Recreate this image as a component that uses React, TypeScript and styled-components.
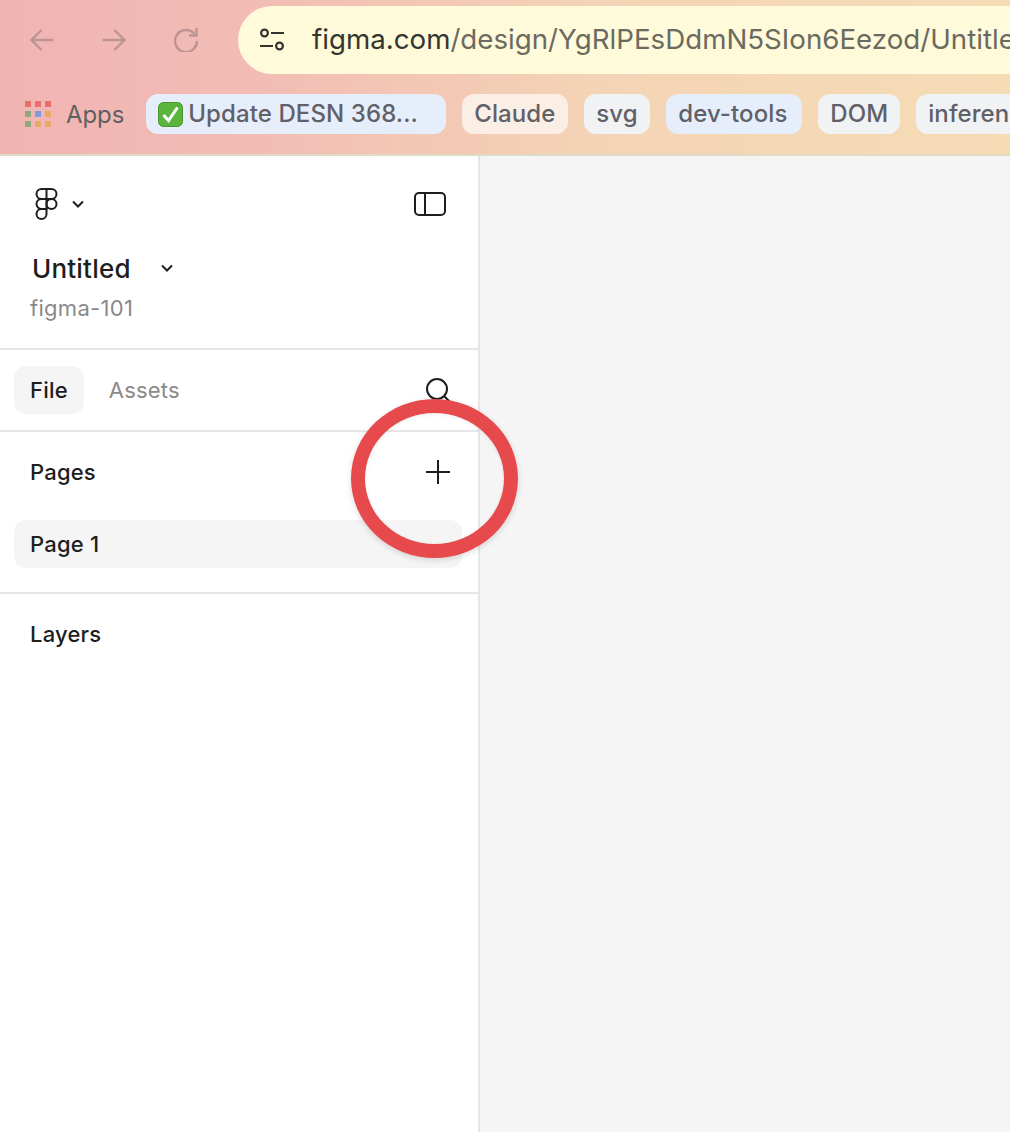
import styled, { createGlobalStyle } from "styled-components";

const GlobalStyle = createGlobalStyle`
  html, body {
    margin: 0;
    padding: 0;
    background: #ffffff;
  }
  body {
    font-family: Inter, "Noto Sans", sans-serif;
  }
`;

const Page = styled.div`
  position: relative;
  width: 1010px;
  height: 1132px;
  overflow: hidden;
  display: flex;
  flex-direction: column;
`;

const Chrome = styled.header`
  flex: none;
  height: 154px;
  box-sizing: content-box;
  border-bottom: 2px solid #dedcc4;
  background: linear-gradient(90deg, #f1b4b3 0%, #f2bcb4 25%, #f4d4b6 60%, #f5dcb5 100%);
  display: flex;
  flex-direction: column;
`;

const Toolbar = styled.div`
  display: flex;
  align-items: center;
  height: 68px;
  margin-top: 6px;
  padding-left: 30px;
`;

const NavButton = styled.button`
  flex: none;
  width: 24px;
  height: 24px;
  padding: 0;
  margin-right: 48px;
  border: 0;
  background: none;
  color: #bd9492;
  display: flex;

  &:last-of-type {
    margin-right: 40px;
  }
`;

const UrlBar = styled.div`
  flex: none;
  width: 840px;
  height: 68px;
  border-radius: 34px;
  background: #fffad9;
  display: flex;
  align-items: center;
  padding-left: 22px;
  box-sizing: border-box;
`;

const TuneIcon = styled.svg`
  flex: none;
  width: 24px;
  height: 24px;
  margin-right: 28px;
  color: #33332f;
`;

const UrlText = styled.span`
  font-size: 27.7px;
  line-height: 32px;
  padding-bottom: 2px;
  color: #6b6a60;
  white-space: nowrap;
`;

const UrlHost = styled.span`
  color: #35352f;
`;

const Bookmarks = styled.nav`
  display: flex;
  align-items: center;
  height: 40px;
  margin-top: 20px;
  padding-left: 25px;
`;

const AppsGrid = styled.svg`
  flex: none;
  width: 26px;
  height: 26px;
  margin-right: 15px;
`;

const AppsLabel = styled.span`
  font-size: 24px;
  letter-spacing: -0.1px;
  color: #5f6064;
  margin-right: 22px;
`;

const Chip = styled.div<{ $bg: string; $width: number }>`
  flex: none;
  width: ${(p) => p.$width}px;
  height: 40px;
  margin-right: 16px;
  border-radius: 12px;
  background: ${(p) => p.$bg};
  color: #5f6068;
  font-size: 24px;
  font-weight: 500;
  letter-spacing: 0.1px;
  line-height: 40px;
  padding-left: 12px;
  box-sizing: border-box;
  white-space: nowrap;
  overflow: hidden;
  display: flex;
  align-items: center;
`;

const CheckEmoji = styled.svg`
  flex: none;
  width: 25px;
  height: 25px;
  margin-right: 5px;
`;

const Workspace = styled.main`
  flex: 1;
  display: flex;
  min-height: 0;
`;

const Sidebar = styled.aside`
  flex: none;
  width: 480px;
  box-sizing: border-box;
  border-right: 2px solid #e6e6e6;
  background: #ffffff;
  display: flex;
  flex-direction: column;
`;

const Canvas = styled.div`
  flex: 1;
  background: #f5f5f5;
`;

const FileHeader = styled.section`
  height: 194px;
  box-sizing: border-box;
  border-bottom: 2px solid #e6e6e6;
  padding: 32px 32px 0 30px;
`;

const LogoRow = styled.div`
  display: flex;
  align-items: center;
  height: 32px;
  padding-left: 5px;
`;

const LogoIcon = styled.svg`
  flex: none;
  width: 23px;
  height: 32px;
  color: #1e1e1e;
`;

const Chevron = styled.svg`
  flex: none;
  width: 12px;
  height: 8px;
  color: #1e1e1e;
`;

const LogoChevron = styled(Chevron)`
  margin-left: 14px;
`;

const PanelToggle = styled.svg`
  flex: none;
  width: 32px;
  height: 26px;
  margin-left: auto;
  color: #1e1e1e;
`;

const TitleRow = styled.div`
  display: flex;
  align-items: center;
  height: 36px;
  margin-top: 30px;
  padding-left: 2px;
`;

const Title = styled.h1`
  margin: 0 30px 0 0;
  font-size: 26px;
  font-weight: 500;
  letter-spacing: 0.2px;
  color: #1e1e1e;
`;

const Team = styled.div`
  margin-top: 7px;
  font-size: 22px;
  line-height: 30px;
  letter-spacing: 0.3px;
  color: #8a8a8a;
`;

const Tabs = styled.div`
  height: 82px;
  box-sizing: border-box;
  border-bottom: 2px solid #e6e6e6;
  padding: 16px 27px 0 14px;
  display: flex;
  align-items: flex-start;
`;

const Tab = styled.div<{ $active?: boolean }>`
  height: 48px;
  line-height: 48px;
  padding: 0 16px;
  border-radius: 12px;
  font-size: 22px;
  font-weight: ${(p) => (p.$active ? 500 : 400)};
  letter-spacing: 0.2px;
  color: ${(p) => (p.$active ? "#1e1e1e" : "#8a8a8a")};
  background: ${(p) => (p.$active ? "#f5f5f5" : "transparent")};
  margin-right: 9px;
`;

const SearchIcon = styled.svg`
  flex: none;
  width: 26px;
  height: 30px;
  margin: 12px 0 0 auto;
  color: #1e1e1e;
`;

const PagesSection = styled.section`
  height: 162px;
  box-sizing: border-box;
  border-bottom: 2px solid #e6e6e6;
  padding: 20px 16px 0 14px;
`;

const SectionRow = styled.div`
  display: flex;
  align-items: center;
  justify-content: space-between;
  height: 40px;
  padding: 0 12px 0 16px;
`;

const SectionLabel = styled.span`
  font-size: 22px;
  font-weight: 500;
  letter-spacing: 0.2px;
  color: #1e1e1e;
`;

const PlusIcon = styled.svg`
  flex: none;
  width: 24px;
  height: 24px;
  color: #1e1e1e;
`;

const PageItem = styled.div`
  height: 48px;
  line-height: 48px;
  margin-top: 28px;
  padding-left: 16px;
  border-radius: 12px;
  background: #f5f5f5;
  font-size: 22px;
  font-weight: 500;
  letter-spacing: 0.2px;
  color: #1e1e1e;
`;

const LayersSection = styled.section`
  padding: 20px 16px 0 14px;
`;

const Highlight = styled.div`
  position: absolute;
  left: 351px;
  top: 399px;
  width: 167px;
  height: 159px;
  box-sizing: border-box;
  border: 14px solid #e64a4d;
  border-radius: 50%;
  box-shadow: 0 2px 6px rgba(0, 0, 0, 0.14), inset 0 1px 4px rgba(0, 0, 0, 0.08);
`;

const appsColors = [
  ["#e8706b", "#e8706b", "#e8706b"],
  ["#90a97f", "#7f9bdb", "#e8a866"],
  ["#90a97f", "#e8a866", "#e8a866"],
];

const chips = [
  { label: "Claude", bg: "#fbeee4", width: 106 },
  { label: "svg", bg: "#f1f2f4", width: 66 },
  { label: "dev-tools", bg: "#e6eefb", width: 136 },
  { label: "DOM", bg: "#f1f2f4", width: 82 },
  { label: "inference", bg: "#f1f2f4", width: 130 },
];

function App() {
  return (
    <Page>
      <GlobalStyle />
      <Chrome>
        <Toolbar>
          <NavButton>
            <svg width="24" height="24" viewBox="0 0 24 24" fill="none" stroke="currentColor" strokeWidth="2.4">
              <path d="M23.5 12H1.5M11.5 2 1.5 12l10 10" />
            </svg>
          </NavButton>
          <NavButton>
            <svg width="24" height="24" viewBox="0 0 24 24" fill="none" stroke="currentColor" strokeWidth="2.4">
              <path d="M.5 12h22M12.5 2l10 10-10 10" />
            </svg>
          </NavButton>
          <NavButton>
            <svg width="24" height="24" viewBox="0 0 24 24" fill="none" stroke="currentColor" strokeWidth="2.4">
              <path d="M20.6 6.2A11 11 0 1 0 23 13" />
              <path d="M22.5 0v7.5H15" />
            </svg>
          </NavButton>
          <UrlBar>
            <TuneIcon viewBox="0 0 24 24" fill="none" stroke="currentColor" strokeWidth="2.2">
              <circle cx="4.5" cy="5" r="3.4" />
              <path d="M11 5h13M0 18h13" />
              <circle cx="19.5" cy="18" r="3.4" />
            </TuneIcon>
            <UrlText>
              <UrlHost>figma.com</UrlHost>/design/YgRlPEsDdmN5SIon6Eezod/Untitled
            </UrlText>
          </UrlBar>
        </Toolbar>
        <Bookmarks>
          <AppsGrid viewBox="0 0 26 26">
            {appsColors.map((row, r) =>
              row.map((color, c) => <rect key={`${r}-${c}`} x={c * 10} y={r * 10} width="6" height="6" fill={color} />),
            )}
          </AppsGrid>
          <AppsLabel>Apps</AppsLabel>
          <Chip $bg="#e6eefb" $width={300}>
            <CheckEmoji viewBox="0 0 25 25">
              <rect x="0.5" y="0.5" width="24" height="24" rx="5" fill="#5bb53c" stroke="#43982b" />
              <path d="M5.5 13l5 5.5L19.5 5.5" fill="none" stroke="#ffffff" strokeWidth="3" />
            </CheckEmoji>
            Update DESN 368...
          </Chip>
          {chips.map((chip) => (
            <Chip key={chip.label} $bg={chip.bg} $width={chip.width}>
              {chip.label}
            </Chip>
          ))}
        </Bookmarks>
      </Chrome>
      <Workspace>
        <Sidebar>
          <FileHeader>
            <LogoRow>
              <LogoIcon viewBox="0 0 23 32" fill="none" stroke="currentColor" strokeWidth="2">
                <path d="M11.5 1H6.5a5 5 0 0 0 0 10h5zM11.5 1h5a5 5 0 0 1 0 10h-5zM11.5 11h-5a5 5 0 0 0 0 10h5z" />
                <circle cx="16.5" cy="16" r="5" />
                <path d="M6.5 21h5v5a5 5 0 1 1-5-5z" />
              </LogoIcon>
              <LogoChevron viewBox="0 0 12 8" fill="none" stroke="currentColor" strokeWidth="2">
                <path d="M1 1.5l5 5 5-5" />
              </LogoChevron>
              <PanelToggle viewBox="0 0 32 26" fill="none" stroke="currentColor" strokeWidth="2">
                <rect x="1" y="2" width="30" height="22" rx="4" />
                <path d="M11 2v22" />
              </PanelToggle>
            </LogoRow>
            <TitleRow>
              <Title>Untitled</Title>
              <Chevron viewBox="0 0 12 8" fill="none" stroke="currentColor" strokeWidth="2">
                <path d="M1 1.5l5 5 5-5" />
              </Chevron>
            </TitleRow>
            <Team>figma-101</Team>
          </FileHeader>
          <Tabs>
            <Tab $active>File</Tab>
            <Tab>Assets</Tab>
            <SearchIcon viewBox="0 0 26 30" fill="none" stroke="currentColor" strokeWidth="2">
              <circle cx="12" cy="11" r="10" />
              <path d="M19 18l6 6" />
            </SearchIcon>
          </Tabs>
          <PagesSection>
            <SectionRow>
              <SectionLabel>Pages</SectionLabel>
              <PlusIcon viewBox="0 0 24 24" fill="none" stroke="currentColor" strokeWidth="2">
                <path d="M12 0v24M0 12h24" />
              </PlusIcon>
            </SectionRow>
            <PageItem>Page 1</PageItem>
          </PagesSection>
          <LayersSection>
            <SectionRow>
              <SectionLabel>Layers</SectionLabel>
            </SectionRow>
          </LayersSection>
        </Sidebar>
        <Canvas />
      </Workspace>
      <Highlight />
    </Page>
  );
}

export default App;
